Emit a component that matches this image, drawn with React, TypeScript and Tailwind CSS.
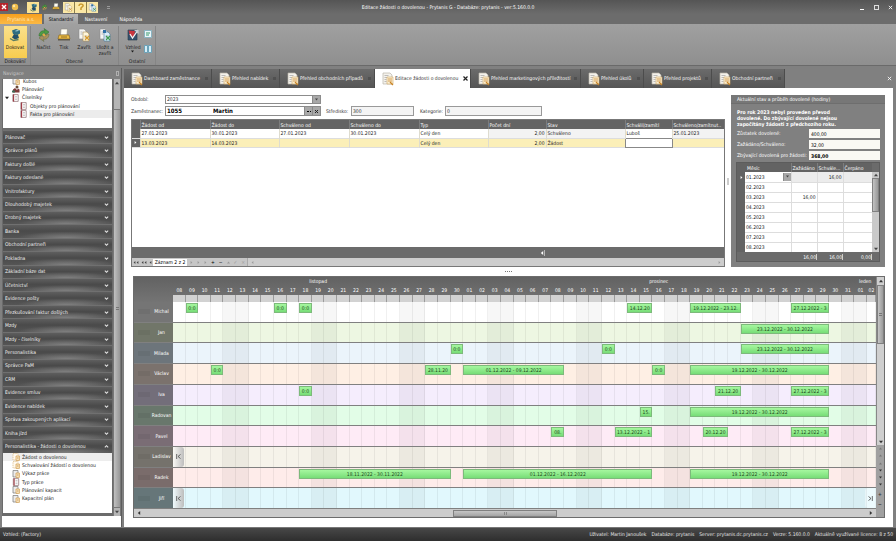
import React from "react";

const navGroups = [
  "Plánovač", "Správce plánů", "Faktury došlé", "Faktury odeslané", "Vnitrofaktury", "Dlouhodobý majetek",
  "Drobný majetek", "Banka", "Obchodní partneři", "Pokladna", "Základní báze dat", "Účetnictví",
  "Evidence pošty", "Přezkušování faktur došlých", "Mzdy", "Mzdy - číselníky", "Personalistika", "Správce PaM",
  "CRM", "Evidence smluv", "Evidence nabídek", "Správa zakoupených aplikací", "Kniha jízd",
  "Personalistika - žádosti o dovolenou",
];

const tabs = [
  { label: "Dashboard zaměstnance", cls: "w-[88px]" },
  { label: "Přehled nabídek", cls: "w-[68px]" },
  { label: "Přehled obchodních případů", cls: "w-[95px]" },
  { label: "Editace žádosti o dovolenou", cls: "w-[96px]", active: true },
  { label: "Přehled marketingových příležitostí", cls: "w-[110px]" },
  { label: "Přehled úkolů", cls: "w-[63px]" },
  { label: "Přehled projektů", cls: "w-[68px]" },
  { label: "Obchodní partneři", cls: "w-[73px]" },
];

type Bar = { from: number; to: number; text: string };
type Person = { name: string; side: string; row: string; bars: Bar[]; left?: boolean; right?: boolean };

// Bars are given in day columns counted from 8 November.
const people: Person[] = [
  { name: "Michal", side: "bg-[#757575]", row: "bg-white", bars: [
    { from: 1, to: 2, text: "0:0" }, { from: 8, to: 9, text: "0:0" }, { from: 10, to: 11, text: "0:0" },
    { from: 36, to: 38, text: "14.12.20" }, { from: 41, to: 45, text: "19.12.2022 - 23.12." }, { from: 49, to: 52, text: "27.12.2022 - 3" }] },
  { name: "Jan", side: "bg-[#717669]", row: "bg-[#edf7e2]", bars: [{ from: 45, to: 52, text: "23.12.2022 - 30.12.2022" }] },
  { name: "Milada", side: "bg-[#6d757b]", row: "bg-[#ebf4fb]", bars: [
    { from: 22, to: 23, text: "0:0" }, { from: 34, to: 35, text: "0:0" }, { from: 45, to: 52, text: "23.12.2022 - 30.12.2022" }] },
  { name: "Václav", side: "bg-[#7b726d]", row: "bg-[#feefe4]", bars: [
    { from: 3, to: 4, text: "0:0" }, { from: 20, to: 22, text: "28.11.20" }, { from: 23, to: 31, text: "01.12.2022 - 09.12.2022" },
    { from: 38, to: 39, text: "0:0" }, { from: 41, to: 52, text: "19.12.2022 - 30.12.2022" }] },
  { name: "Iva", side: "bg-[#736e7a]", row: "bg-[#f5edfd]", bars: [
    { from: 10, to: 11, text: "0:0" }, { from: 43, to: 45, text: "21.12.20" }, { from: 49, to: 52, text: "27.12.2022 - 3" }] },
  { name: "Radovan", side: "bg-[#69776c]", row: "bg-[#e2fde7]", bars: [
    { from: 37, to: 38, text: "15." }, { from: 41, to: 52, text: "19.12.2022 - 30.12.2022" }] },
  { name: "Pavel", side: "bg-[#7a6d75]", row: "bg-[#feebf6]", bars: [
    { from: 30, to: 31, text: "08." }, { from: 35, to: 38, text: "13.12.2022 - 1" }, { from: 42, to: 44, text: "20.12.20" },
    { from: 49, to: 52, text: "27.12.2022 - 3" }] },
  { name: "Ladislav", side: "bg-[#75726c]", row: "bg-[#f6f3ea]", bars: [], left: true },
  { name: "Radek", side: "bg-[#7a6c6b]", row: "bg-[#feecea]", bars: [
    { from: 10, to: 22, text: "18.11.2022 - 30.11.2022" }, { from: 23, to: 38, text: "01.12.2022 - 16.12.2022" },
    { from: 41, to: 52, text: "19.12.2022 - 30.12.2022" }] },
  { name: "Jiří", side: "bg-[#667679]", row: "bg-[#e1f8fd]", bars: [], left: true, right: true },
];

const days = Array.from({ length: 56 }, (_, i) => (i < 23 ? i + 8 : i < 54 ? i - 22 : i - 53));
const dayGrid = "grid grid-cols-[repeat(55,minmax(0,18fr))_minmax(0,13fr)]";
const pad = (n: number) => String(n).padStart(2, "0");

function Arrow({ dir, className = "h-[4px] w-[4px]" }: { dir: "up" | "down" | "left" | "right"; className?: string }) {
  const d = { up: "M0 4L2.5 1L5 4z", down: "M0 1L2.5 4L5 1z", left: "M4 0L1 2.5L4 5z", right: "M1 0L4 2.5L1 5z" }[dir];
  return <svg viewBox="0 0 5 5" className={`shrink-0 fill-current ${className}`}><path d={d} /></svg>;
}

function Chevron({ up }: { up?: boolean }) {
  return (
    <svg viewBox="0 0 6 6" className="mr-px h-[5px] w-[5px] fill-none stroke-[#e4e4e4]">
      <path d={up ? "M1 4L3 2L5 4" : "M1 2L3 4L5 2"} strokeWidth="1.3" />
    </svg>
  );
}

function DocIcon({ className = "h-[14px] w-[12px]" }: { className?: string }) {
  return (
    <svg viewBox="0 0 12 14" className={`shrink-0 ${className}`}>
      <path d="M1 1h7l2 2v9H1z" fill="#f4f2ec" stroke="#b9b5aa" strokeWidth=".7" />
      <path d="M2.5 3.5h4M2.5 5.5h3M2.5 7.5h2M2.5 9.5h2" stroke="#a5a5a5" strokeWidth=".7" />
      <path d="M5 5h6v7H5z" fill="#fbefd2" stroke="#cfa564" strokeWidth=".6" />
      <path d="M6 7h4M6 9h4" stroke="#cf9448" strokeWidth=".9" />
      <path d="M8 10l3 3" stroke="#c98426" strokeWidth="1.3" />
    </svg>
  );
}

function Book({ className = "h-[8px] w-[7px]" }: { className?: string }) {
  return (
    <svg viewBox="0 0 7 8" className={`shrink-0 ${className}`}>
      <path d="M.8.6h5.4v6.8H.8z" fill="#fff" stroke="#8d6a6e" strokeWidth=".7" />
      <path d="M1.6.6v6.8" stroke="#9d3540" strokeWidth="1.1" />
      <path d="M3 2.5h2M3 4h2M3 5.5h2" stroke="#999" strokeWidth=".5" />
    </svg>
  );
}

function Sheet({ pale }: { pale?: boolean }) {
  return (
    <svg viewBox="0 0 8 8" className="h-[8px] w-[8px] shrink-0">
      <path d="M1 .5h5v6.500H1z" fill={pale ? "#fffaf0" : "#ececec"} stroke={pale ? "#d9b57c" : "#777"} strokeWidth=".7" strokeDasharray={pale ? "1.500 .8" : undefined} />
      <path d="M4 3h3.400v4.400H4z" fill="#fbe9c4" stroke="#cf9a4b" strokeWidth=".7" />
      <path d="M5 5h1.500" stroke="#a66a1f" strokeWidth=".6" />
    </svg>
  );
}

function People() {
  return (
    <svg viewBox="0 0 8 8" className="h-[8px] w-[8px] shrink-0">
      <circle cx="5" cy="2" r="1.500" fill="#6b4a36" />
      <path d="M1 7.500V4.500l2-1.500 2 2 1-1.500 1.500 1v3z" fill="#7d3b3b" />
      <path d="M0 7.500V5.500h3v2z" fill="#3f6a57" />
    </svg>
  );
}

function DockIcon({ className }: { className: string }) {
  return (
    <svg viewBox="0 0 14 14" className={className}>
      <path d="M4 2.500l4-1.500 4 1.500v3L9.500 7 5 6z" fill="#2f6c80" />
      <path d="M6 6l4 1 1 3-4 1.500-3-2z" fill="#24506b" />
      <path d="M7.500 3l3-.5" stroke="#a9d3df" strokeWidth="1" />
      <path d="M2 10.500l3.500 2 5-1" fill="none" stroke="#5d7d62" strokeWidth="1.400" />
    </svg>
  );
}

function RefreshIcon({ className }: { className: string }) {
  return (
    <svg viewBox="0 0 14 14" className={className}>
      <path d="M2 8C2 4 5 2 8 3l-1-2.500L12 4 8.500 7 8 5C6 5 5 6 4.500 8z" fill="#4f9b45" stroke="#2e6a2a" strokeWidth=".5" />
      <path d="M12 6c0 4-3 6-6 5l1 2.500L2 10l3.500-3 .5 2c2 0 3-1 3.500-3z" fill="#a9905e" stroke="#5d6a42" strokeWidth=".5" />
      <path d="M6 6l2 2" stroke="#e4ae3b" strokeWidth="2" />
    </svg>
  );
}

function PrintIcon({ className }: { className: string }) {
  return (
    <svg viewBox="0 0 14 14" className={className}>
      <path d="M4 1h6.500L10 7H3.500z" fill="#fffef6" stroke="#8d8a80" strokeWidth=".6" />
      <path d="M2 7h10l1 4H1z" fill="#edbd45" stroke="#8c6c24" strokeWidth=".7" />
      <path d="M1 11h12v1.500H1z" fill="#5f594c" />
      <path d="M4 9h6" stroke="#805f1e" strokeWidth=".8" />
    </svg>
  );
}

function CloseDocIcon({ className, save }: { className: string; save?: boolean }) {
  return (
    <svg viewBox="0 0 14 14" className={className}>
      <path d="M2 1h5l2 2v8H2z" fill="#f6f6f4" stroke="#8b8b8b" strokeWidth=".6" />
      <path d="M6 4h4l2 2v7H6z" fill={save ? "#d9ecfa" : "#fff6da"} stroke={save ? "#45789f" : "#ab8f51"} strokeWidth=".6" />
      <path d="M3.500 4h2M3.500 6h2M7.500 8h3M7.500 10h3" stroke="#8a8a8a" strokeWidth=".6" />
      <path d="M8 8l4 4m0-4l-4 4" stroke={save ? "#3d9c4d" : "#d89b2b"} strokeWidth="1.100" />
      {save && <path d="M5 2h3v3H5z" fill="#2f6fa5" />}
    </svg>
  );
}

function LookIcon() {
  return (
    <svg viewBox="0 0 14 14" className="h-[14px] w-[14px] shrink-0">
      <path d="M2 2h9v10H2z" fill="#34526e" stroke="#25394c" strokeWidth=".6" />
      <path d="M2.500 2.500L9 3 8 9 4 8z" fill="#c9353e" />
      <path d="M4 6l2.500 4L11 3.500" fill="none" stroke="#f3f3f3" strokeWidth="1.300" />
      <path d="M8 2h4.500v4z" fill="#c9cfd6" />
    </svg>
  );
}

function Title() {
  return (
    <header className="flex h-[14px] shrink-0 items-center bg-linear-to-b from-[#555555] to-[#6c6c6c] text-white">
      <div className="flex w-[120px] items-center">
        <svg viewBox="0 0 8 8" className="h-[8px] w-[8px]"><path d="M0 0h8v8H0z" fill="#b5242c" /><path d="M2 2l4 4M6 2L2 6" stroke="#fff" strokeWidth="1.400" /></svg>
        <svg viewBox="0 0 8 8" className="ml-[3px] h-[8px] w-[8px]"><circle cx="4" cy="4" r="3.200" fill="#eebc4b" /><circle cx="3" cy="3" r="1.200" fill="#fbe6a6" /></svg>
        <button aria-label="Dokovat" className="ml-[8px] flex h-[11px] w-[12px] items-center justify-center bg-[#fbe293]"><DockIcon className="h-[9px] w-[9px]" /></button>
        <RefreshIcon className="ml-[2px] h-[7px] w-[7px]" />
        <PrintIcon className="ml-[4px] h-[8px] w-[8px]" />
        <div className="ml-[3px] flex h-[11px] gap-px bg-[#8a7d4c]">
          {[0, 1, 2].map((i) => (
            <span key={i} className="flex h-[11px] w-[11px] items-center justify-center bg-[#fbe8a6]">
              {i === 1 ? <svg viewBox="0 0 8 8" className="h-[8px] w-[8px]"><path d="M2 3c0-3 5-2 4 0L4 5v2" fill="none" stroke="#c9992e" strokeWidth="1.500" /></svg> : <CloseDocIcon save={i === 2} className="h-[9px] w-[9px]" />}
            </span>
          ))}
        </div>
        <span className="ml-[9px] h-[3px] w-[3px] border-y border-[#999999]" />
      </div>
      <h1 className="flex-1 text-center">Editace žádosti o dovolenou - Prytanis G - Databáze: prytanis - ver:5.160.0.0</h1>
      <div className="flex w-[120px] items-center justify-end gap-[9px] pr-[3px]">
        <button aria-label="Minimalizovat" className="flex h-[5px] w-[5px] items-end"><span className="h-px w-[4px] bg-white" /></button>
        <button aria-label="Obnovit" className="h-[5px] w-[5px] border border-[#dddddd]" />
        <button aria-label="Zavřít okno"><svg viewBox="0 0 6 6" className="h-[5px] w-[5px]"><path d="M1 1l4 4M5 1L1 5" stroke="#fff" /></svg></button>
      </div>
    </header>
  );
}

function BigButton({ icon, label, cls }: { icon: React.ReactNode; label: React.ReactNode; cls: string }) {
  return (
    <button className={`flex h-[32px] flex-col items-center pt-[2px] text-center leading-[6px] ${cls}`}>
      {icon}
      <span className="mt-[2px]">{label}</span>
    </button>
  );
}

function Ribbon() {
  return (
    <div className="shrink-0">
      <nav className="flex h-[10px] bg-[#6c6c6c] text-white">
        <button className="w-[42px] bg-linear-to-b from-[#f7a01c] to-[#fbb944] text-[#ffe9bd]">Prytanis a.s.</button>
        <button className="ml-[2px] w-[34px] bg-linear-to-b from-[#b5b5b5] to-[#a0a0a0] text-black">Standardní</button>
        <button className="w-[36px]">Nastavení</button>
        <button className="w-[34px]">Nápověda</button>
      </nav>
      <div className="flex h-[42px] border-b border-[#6a6a6a] bg-linear-to-b from-[#a0a0a0] to-[#8f8f8f] pt-[2px] text-[#1c1c1c]">
        <section className="flex w-[31px] flex-col items-center border-r border-[#858585]">
          <BigButton cls="w-[23px] bg-linear-to-b from-[#fbe08a] to-[#f8cc4e]" icon={<DockIcon className="h-[14px] w-[14px]" />} label="Dokovat" />
          <h2 className="leading-[7px]">Dokování</h2>
        </section>
        <section className="flex w-[88px] flex-col items-center border-r border-[#858585]">
          <div className="flex">
            <BigButton cls="w-[21px]" icon={<RefreshIcon className="h-[14px] w-[14px]" />} label="Načíst" />
            <BigButton cls="w-[20px]" icon={<PrintIcon className="h-[14px] w-[14px]" />} label="Tisk" />
            <BigButton cls="w-[20px]" icon={<CloseDocIcon className="h-[14px] w-[14px]" />} label="Zavřít" />
            <BigButton cls="w-[22px]" icon={<CloseDocIcon save className="h-[14px] w-[14px]" />} label={<>Uložit a<br />zavřít</>} />
          </div>
          <h2 className="leading-[7px]">Obecné</h2>
        </section>
        <section className="flex w-[37px] flex-col items-center border-r border-[#858585]">
          <div className="flex">
            <BigButton cls="w-[22px]" icon={<LookIcon />} label={<>Vzhled<Arrow dir="down" className="mx-auto h-[3px] w-[3px]" /></>} />
            <div className="flex flex-col gap-[7px] pt-[4px]">
              <svg viewBox="0 0 8 8" className="h-[8px] w-[8px]"><path d="M.5.5h7v7h-7z" fill="#eaf6fa" stroke="#8ab4c2" /><path d="M2 3h4M2 5h3" stroke="#3b9a6d" /></svg>
              <svg viewBox="0 0 8 8" className="h-[8px] w-[8px]"><path d="M.5.5h3v7h-3zM4.500.5h3v7h-3z" fill="#d4edf7" stroke="#6ba2b9" /></svg>
            </div>
          </div>
          <h2 className="leading-[7px]">Ostatní</h2>
        </section>
      </div>
    </div>
  );
}

function Navigation() {
  return (
    <aside className="flex w-[122px] shrink-0 flex-col border-r border-[#5d5d5d] bg-[#808080] pl-[2px]">
      <div className="flex h-[11px] items-center justify-between px-px text-[#c4c4c4]">
        <h2>Navigace</h2><span className="mr-px h-[5px] w-[3px] border border-[#b0b0b0]" />
      </div>
      <div className="flex min-h-0 flex-1 bg-[#6b6b6b]">
        <div className="flex min-w-0 flex-1 flex-col px-px pb-[3px]">
          <div className="flex h-[49px] shrink-0 flex-col overflow-hidden bg-white text-[#222222]">
            <a href="#kubos" className="-mt-[2px] flex h-[8px] shrink-0 items-center gap-[3px] pl-[9px]"><Sheet />Kubos</a>
            <a href="#planovani" className="flex h-[8px] shrink-0 items-center gap-[2px] pl-[9px]"><People />Plánování</a>
            <a href="#ciselniky" className="flex h-[9px] shrink-0 items-center gap-[3px] pl-[2px]"><Arrow dir="down" className="h-[4px] w-[4px]" /><Book />Číselníky</a>
            <a href="#objekty" className="flex h-[8px] shrink-0 items-center gap-[3px] pl-[17px]"><Book />Objekty pro plánování</a>
            <a href="#fakta" className="flex h-[8px] shrink-0 items-center pl-[17px]"><Book /><span className="ml-[2px] flex-1 bg-[#ececec] pl-px leading-[8px]">Fakta pro plánování</span></a>
          </div>
          <div className="mt-[2px] flex min-h-0 flex-1 flex-col">
            {navGroups.map((g, i) => (
              <button key={g} className="flex min-h-0 flex-1 items-center justify-between border-t border-[#707070] bg-[radial-gradient(ellipse_45%_50%_at_58%_100%,#808080_0%,transparent_100%),linear-gradient(#5e5e5e,#4a4a4a_45%,#555555)] px-[2px] text-left text-[#f2f2f2]">
                {g}<Chevron up={i === navGroups.length - 1} />
              </button>
            ))}
          </div>
          <div className="flex h-[60px] shrink-0 flex-col bg-white text-[#222222]">
            {["Žádost o dovolenou", "Schvalování žádostí o dovolenou", "Výkaz práce", "Typ práce", "Plánování kapacit", "Kapacitní plán"].map((t, i) => (
              <a key={t} href={`#nav${i}`} className={`flex items-center gap-[2px] pl-[9px] ${i % 3 === 2 ? "h-[9px]" : "h-[8px]"} ${i === 0 ? "bg-[#ededed]" : ""}`}>
                {i === 3 ? <Book className="h-[8px] w-[8px]" /> : <Sheet pale={i < 2} />}{t}
              </a>
            ))}
          </div>
        </div>
        <div className="flex w-[8px] flex-col items-center border-x border-[#777777] bg-[#b5b5b5] text-[#444444]">
          <div className="flex h-[8px] items-center"><Arrow dir="up" /></div>
          <div className="mt-[22px] flex w-full flex-1 items-center justify-center border-y border-[#777777] bg-linear-to-r from-[#c0c0c0] to-[#979797]"><span className="h-[3px] w-[3px] border-y border-[#777777]" /></div>
          <div className="flex h-[8px] items-center"><Arrow dir="down" /></div>
        </div>
      </div>
      <div className="h-[11px] shrink-0 bg-white" />
    </aside>
  );
}

function Tabs() {
  return (
    <div className="flex h-[20px] shrink-0 items-end bg-[#808080]" role="tablist">
      {tabs.map((t) => (
        <button key={t.label} role="tab" aria-selected={!!t.active} className={`flex h-[19px] shrink-0 items-center overflow-hidden border-r border-[#4c4c4c] pr-[2px] pl-[7px] whitespace-nowrap ${t.cls} ${t.active ? "bg-white text-[#333333]" : "bg-linear-to-b from-[#6b6b6b] to-[#555555] text-white"}`}>
          <DocIcon /><span className="ml-px">{t.label}</span>
          <svg viewBox="0 0 5 5" className="ml-auto h-[5px] w-[5px] shrink-0">
            {t.active ? <path d="M.5.5l4 4m0-4l-4 4" stroke="#222" strokeWidth="1.200" /> : <path d="M1 1h3v3H1z" fill="#505050" />}
          </svg>
        </button>
      ))}
      <button aria-label="Zavřít kartu" className="mr-px mb-[7px] ml-auto text-white"><svg viewBox="0 0 6 6" className="h-[5px] w-[5px]"><path d="M1 1l4 4M5 1L1 5" stroke="currentColor" /></svg></button>
    </div>
  );
}

const dropBox = "flex w-[8px] shrink-0 items-center justify-center border-l border-[#8a8a8a] bg-[#a8a8a8] text-[#444444]";

function Form() {
  return (
    <form className="flex h-[24px] shrink-0 flex-col gap-[2px] text-[#333333]">
      <div className="flex items-center">
        <label htmlFor="obdobi" className="w-[34px]">Období:</label>
        <div className="flex h-[9px] w-[156px] border border-[#8c8c8c]">
          <select id="obdobi" className="min-w-0 flex-1 appearance-none bg-white pl-px leading-[7px]"><option>2023</option></select>
          <span className={dropBox}><Arrow dir="down" className="h-[3px] w-[3px]" /></span>
        </div>
      </div>
      <div className="flex items-center">
        <label htmlFor="zam" className="w-[34px]">Zaměstnanec:</label>
        <div className="flex h-[10px] w-[156px] border border-[#8c8c8c] font-['DejaVu_Sans_Condensed'] text-[6px] font-bold text-black">
          <input id="zam" defaultValue="1055" className="w-[47px] pl-px leading-[8px]" />
          <input aria-label="Jméno" defaultValue="Martin" className="min-w-0 flex-1 leading-[8px]" />
          <button type="button" aria-label="Vybrat" className={dropBox}><span className="w-[4px] border-t border-dotted border-black" /></button>
          <button type="button" aria-label="Vymazat" className={dropBox}><svg viewBox="0 0 5 5" className="h-[5px] w-[5px]"><path d="M1 1l3 3m0-3L1 4" stroke="#222" /></svg></button>
        </div>
        <label htmlFor="stred" className="ml-[5px] w-[25px]">Středisko:</label>
        <input id="stred" defaultValue="300" className="h-[10px] w-[63px] border border-[#999999] bg-[#f4f4f4] pl-px" />
        <label htmlFor="kat" className="ml-[6px] w-[25px]">Kategorie:</label>
        <input id="kat" defaultValue="0" className="h-[10px] w-[97px] border border-[#999999] bg-[#f4f4f4] pl-px" />
      </div>
    </form>
  );
}

const requestRows = [
  ["27.01.2023", "30.01.2023", "27.01.2023", "30.01.2023", "Celý den", "2,00", "Schváleno", "Luboš", "25.01.2023"],
  ["13.03.2023", "14.03.2023", "", "", "Celý den", "2,00", "Žádost", "", ""],
];

function Requests() {
  return (
    <div className="flex min-h-0 flex-1 flex-col border border-[#777777] bg-white">
      <table className="w-full table-fixed border-collapse leading-[8px]">
        <colgroup>
          <col className="w-[8px]" /><col className="w-[70px]" /><col className="w-[69px]" /><col className="w-[70px]" /><col className="w-[70px]" />
          <col className="w-[69px]" /><col className="w-[58px]" /><col className="w-[79px]" /><col className="w-[47px]" /><col />
        </colgroup>
        <thead>
          <tr className="bg-[#646464] text-left text-white">
            <th />
            {["Žádost od", "Žádost do", "Schváleno od", "Schváleno do", "Typ", "Počet dní", "Stav", "Schválil/zamítl", "Schváleno/zamítnut.."].map((h) => (
              <th key={h} className="h-[9px] overflow-hidden border-l border-[#7d7d7d] p-0 pl-px font-normal whitespace-nowrap">{h}</th>
            ))}
          </tr>
        </thead>
        <tbody>
          {requestRows.map((r, i) => (
            <tr key={i} className={`border-b border-[#dddddd] text-[#222222] ${i ? "bg-[#fbefb8]" : "bg-white"}`}>
              <td className="bg-[#646464] p-0 text-white">{i === 1 && <Arrow dir="right" className="mx-auto h-[3px] w-[3px]" />}</td>
              {r.map((c, j) => (
                <td key={j} className={`h-[9px] border-l p-0 pl-px ${j === 5 ? "pr-px text-right" : ""} ${i === 0 && j >= 5 && j !== 7 ? "bg-[#f3f3f3]" : ""} ${i === 1 && j === 7 ? "border border-[#888888] bg-white" : "border-[#dedccf]"}`}>{c}</td>
              ))}
            </tr>
          ))}
        </tbody>
      </table>
      <div className="mt-auto flex h-[11px] items-center justify-center bg-[#6b6b6b] pl-[228px] text-white"><Arrow dir="left" /><span className="h-[6px] border-l border-[#b5b5b5]" /></div>
      <div className="flex h-[8px] items-center bg-[#c6c6c6] text-[#444444]">
        <div className="flex w-[21px] items-center justify-around">
          <span className="flex"><Arrow dir="left" className="h-[3px] w-[3px]" /><Arrow dir="left" className="h-[3px] w-[3px]" /></span>
          <span className="flex"><Arrow dir="left" className="h-[3px] w-[3px]" /><Arrow dir="left" className="h-[3px] w-[3px]" /></span>
          <Arrow dir="left" className="h-[3px] w-[3px]" />
        </div>
        <span className="w-[34px] bg-white text-center leading-[7px] text-black">Záznam 2 z 2</span>
        <div className="flex h-full w-[60px] items-center gap-[4px] pl-[3px] text-[#999999]">
          <Arrow dir="right" className="h-[3px] w-[3px]" /><Arrow dir="right" className="h-[3px] w-[3px]" /><Arrow dir="right" className="h-[3px] w-[3px]" />
          <span className="text-black">+</span><span className="text-black">−</span><Arrow dir="up" className="h-[3px] w-[3px]" /><span>✓</span><span>×</span>
        </div>
        <div className="flex h-full flex-1 items-center justify-between border-l border-[#aaaaaa] bg-[#cdcdcd] px-[3px] text-[#9d9d9d]"><Arrow dir="left" className="h-[3px] w-[3px]" /><Arrow dir="right" className="h-[3px] w-[3px]" /></div>
      </div>
    </div>
  );
}

const months = Array.from({ length: 8 }, (_, i) => `${pad(i + 1)}.2023`);

function Balance() {
  return (
    <section className="flex w-[154px] shrink-0 flex-col bg-[#808080] text-white">
      <h2 className="h-[9px] border-b border-[#6e6e6e] bg-[#777777] pl-[6px] leading-[9px]">Aktuální stav a průběh dovolené (hodiny)</h2>
      <div className="flex min-h-0 flex-1 flex-col px-[5px] pb-[5px]">
        <p className="mt-[5px] mb-[2px] pl-px leading-[6px] font-bold">Pro rok 2023 nebyl proveden převod<br />dovolené. Do zbývající dovolené nejsou<br />započítány žádosti z předchozího roku.</p>
        <div className="flex flex-col gap-[2px]">
          {[["Zůstatek dovolené:", "400,00"], ["Zažádáno/Schváleno:", "32,00"], ["Zbývající dovolená pro žádosti:", "368,00"]].map(([l, v], i) => (
            <div key={l} className="flex h-[9px] items-center">
              <label htmlFor={`b${i}`} className="w-[73px] pl-px whitespace-nowrap">{l}</label>
              <input id={`b${i}`} defaultValue={v} className={`h-[9px] min-w-0 flex-1 bg-[#faf9f4] pl-[2px] text-black ${i === 2 ? "font-bold" : ""}`} />
            </div>
          ))}
        </div>
        <div className="mt-[2px] flex min-h-0 flex-1 border border-[#5c5c5c] bg-[#6b6b6b]">
          <div className="flex min-w-0 flex-1 flex-col">
            <div className="min-h-0 flex-1 overflow-hidden">
              <table className="w-full table-fixed border-collapse leading-[8px]">
                <colgroup><col className="w-[8px]" /><col className="w-[46px]" /><col className="w-[26px]" /><col className="w-[26px]" /><col /></colgroup>
                <thead>
                  <tr className="h-[9px] bg-[#636363] text-left"><th /><th className="p-0 pl-[2px] font-normal">Měsíc</th><th className="border-l border-[#7d7d7d] p-0 pl-px font-normal">Zažádáno</th><th className="border-l border-[#7d7d7d] p-0 pl-px font-normal">Schvále...</th><th className="border-l border-[#7d7d7d] p-0 pl-px font-normal">Čerpáno</th></tr>
                </thead>
                <tbody className="text-[#222222]">
                  {months.map((m, i) => (
                    <tr key={m} className={`h-[10px] ${i ? "bg-white" : "bg-[#ececec]"}`}>
                      <td className="bg-[#636363] p-0 text-white">{i === 0 && <Arrow dir="right" className="mx-auto h-[3px] w-[3px]" />}</td>
                      <td className="border-b border-[#dddddd] bg-white p-0 pl-px"><div className="flex justify-between">{m}{i === 0 && <span className={`${dropBox} h-[8px]`}><Arrow dir="down" className="h-[3px] w-[3px]" /></span>}</div></td>
                      <td className="border-b border-l border-[#dddddd] p-0 pr-px text-right">{i === 2 ? "16,00" : ""}</td>
                      <td className="border-b border-l border-[#dddddd] p-0 pr-px text-right">{i === 0 ? "16,00" : ""}</td>
                      <td className="border-b border-l border-[#dddddd] p-0" />
                    </tr>
                  ))}
                </tbody>
              </table>
            </div>
            <div className="grid h-[9px] shrink-0 grid-cols-[1fr_26px_26px_29px] items-center text-right leading-[6px]">
              <span />{["16,00", "16,00", "0,00"].map((v, i) => <span key={i} className="border-r border-[#cccccc]">{v}</span>)}
            </div>
          </div>
          <div className="flex w-[7px] flex-col pt-[9px] pb-[9px] text-[#444444]">
            <div className="flex min-h-0 flex-1 flex-col items-center justify-between bg-[#c9c9c9]">
              <Arrow dir="up" className="my-px h-[4px] w-[4px]" />
              <span className="h-[34px] w-full border border-[#808080] bg-linear-to-r from-[#c2c2c2] to-[#999999]" />
              <Arrow dir="down" className="mt-auto mb-px h-[4px] w-[4px]" />
            </div>
          </div>
        </div>
      </div>
    </section>
  );
}

function Jump({ flip }: { flip?: boolean }) {
  return <svg viewBox="0 0 5 5" className={`h-[5px] w-[5px] ${flip ? "-scale-x-100" : ""}`}><path d="M.7 0v5M4.500.5l-2.500 2 2.500 2" fill="none" stroke="#444" strokeWidth=".8" /></svg>;
}

function GanttRow({ p, first }: { p: Person; first: boolean }) {
  const weekend = first ? "bg-black/3" : "bg-black/4";
  return (
    <div className="flex min-h-0 flex-1 border-b border-[#808080]">
      <div className={`flex w-[39px] shrink-0 items-center pl-[4px] text-white ${p.side}`}><span className="h-[5px] w-[12px] bg-black/5" /><span className="flex-1 text-center">{p.name}</span></div>
      <div className={`grid min-w-0 flex-1 ${p.row}`}>
        <div className={`col-start-1 row-start-1 ${dayGrid}`}>
          {days.map((_, i) => <span key={i} className={`border-r border-black/6 ${i % 7 === 4 || i % 7 === 5 ? weekend : ""}`} />)}
        </div>
        <div className={`col-start-1 row-start-1 ${dayGrid}`}>
          {p.bars.map((b) => (
            <div key={b.from} style={{ gridColumn: `${b.from + 1} / ${b.to + 1}` }} className="row-start-1 mt-px h-[10px] overflow-hidden border border-[#7dba7b] bg-linear-to-b from-[#a5f79f] to-[#77dd77] px-px text-center leading-[8px] whitespace-nowrap text-[#1d4a1d]">{b.text}</div>
          ))}
        </div>
        {(p.left || p.right) && (
          <div className="col-start-1 row-start-1 flex justify-between">
            {p.left && <button aria-label="Předchozí" className="flex w-[11px] items-center justify-center rounded-r-[3px] bg-linear-to-r from-white/50 to-[#bdbdbd]"><Jump /></button>}
            {p.right && <button aria-label="Další" className="flex w-[11px] items-center justify-center rounded-l-[3px] bg-white/40"><Jump flip /></button>}
          </div>
        )}
      </div>
    </div>
  );
}

function Gantt() {
  return (
    <section className="flex min-h-0 flex-1 border border-[#6c6c6c]">
      <div className="flex min-w-0 flex-1 flex-col">
        <div className="flex h-[25px] shrink-0 bg-linear-to-b from-[#626262] to-[#747474] text-white">
          <div className="w-[39px] shrink-0" />
          <div className="flex min-w-0 flex-1 flex-col">
            <div className={`h-[9px] text-center leading-[9px] ${dayGrid}`}>
              <span className="col-span-23">listopad</span>
              <span className="col-span-31">prosinec</span>
              <span className="col-span-2">leden</span>
            </div>
            <div className={`h-[9px] text-center leading-[9px] ${dayGrid}`}>
              {days.map((d, i) => <span key={i}>{pad(d)}</span>)}
            </div>
            <div className={`flex-1 bg-[#d2d2d2] ${dayGrid}`}>
              {days.map((_, i) => <span key={i} className="border-r border-[#9b9b9b]" />)}
            </div>
          </div>
        </div>
        <div className="flex min-h-0 flex-1 flex-col">{people.map((p, i) => <GanttRow key={p.name} p={p} first={i === 0} />)}</div>
        <div className="flex h-[8px] shrink-0 items-center justify-between bg-[#cccccc] px-[3px] text-[#333333]">
          <Arrow dir="left" />
          <span className="flex h-[7px] w-[104px] items-center justify-center border border-[#808080] bg-linear-to-b from-[#c5c5c5] to-[#a5a5a5]"><span className="h-[3px] w-[3px] border-x border-[#888888]" /></span>
          <Arrow dir="right" />
        </div>
      </div>
      <div className="flex w-[8px] shrink-0 flex-col items-center bg-[#a0a0a0] text-[#333333]">
        <div className="flex min-h-0 w-full flex-1 flex-col items-center border-l border-[#888888] bg-[#cfcfcf]">
          <Arrow dir="up" className="my-[2px] h-[4px] w-[4px]" />
          <span className="flex h-[59px] w-full items-center justify-center border border-[#808080] bg-linear-to-r from-[#c5c5c5] to-[#9b9b9b]"><span className="h-[3px] w-[3px] border-y border-[#777777]" /></span>
          <Arrow dir="down" className="mt-auto mb-px h-[4px] w-[4px]" />
        </div>
        <div className="flex h-[72px] flex-col items-center justify-around pb-[8px] leading-[6px]">
          <Arrow dir="up" className="h-[3px] w-[3px] text-[#777777]" /><Arrow dir="up" className="h-[3px] w-[3px] text-[#777777]" /><Arrow dir="up" className="h-[3px] w-[3px] text-[#777777]" />
          <Arrow dir="down" className="h-[3px] w-[3px]" /><Arrow dir="down" className="h-[3px] w-[3px]" /><Arrow dir="down" className="h-[3px] w-[3px]" />
          <button aria-label="Přiblížit" className="font-bold">+</button><button aria-label="Oddálit" className="font-bold">−</button>
        </div>
      </div>
    </section>
  );
}

export default function App() {
  return (
    <div className="flex h-screen flex-col overflow-hidden bg-[#808080] font-['DejaVu_Sans_Condensed','DejaVu_Sans',sans-serif] text-[5px] leading-[7px]">
      <Title />
      <Ribbon />
      <div className="flex min-h-0 flex-1 pt-[2px]">
        <Navigation />
        <main className="ml-[2px] flex min-w-0 flex-1 flex-col pr-[3px]">
          <Tabs />
          <div className="flex min-h-0 flex-1 flex-col bg-white pt-[7px] pr-[8px] pb-[9px] pl-[7px]">
            <div className="flex h-[172px] shrink-0">
              <div className="flex min-w-0 flex-1 flex-col"><Form /><Requests /></div>
              <div className="flex w-[6px] items-center justify-center"><span className="h-[7px] w-[2px] bg-[#cccccc]" /></div>
              <Balance />
            </div>
            <div className="flex h-[9px] shrink-0 items-center justify-center gap-px">
              {[0, 1, 2, 3].map((i) => <span key={i} className="h-px w-px bg-[#777777]" />)}
            </div>
            <div className="flex min-h-0 flex-1 pl-[2px]"><Gantt /></div>
          </div>
        </main>
      </div>
      <footer className="flex h-[14px] shrink-0 items-center gap-[5px] border-t border-[#777777] bg-linear-to-b from-[#484848] to-[#2e2e2e] px-[3px] text-[#e5e5e5]">
        <span className="mr-auto">Vzhled: (Factory)</span>
        <span>Uživatel: Martin Janoušek</span><span>Databáze: prytanis</span><span>Server: prytanis.dc.prytanis.cz</span><span>Verze: 5.160.0.0</span><span>Aktuálně využívané licence: 8 z 50</span>
      </footer>
    </div>
  );
}
